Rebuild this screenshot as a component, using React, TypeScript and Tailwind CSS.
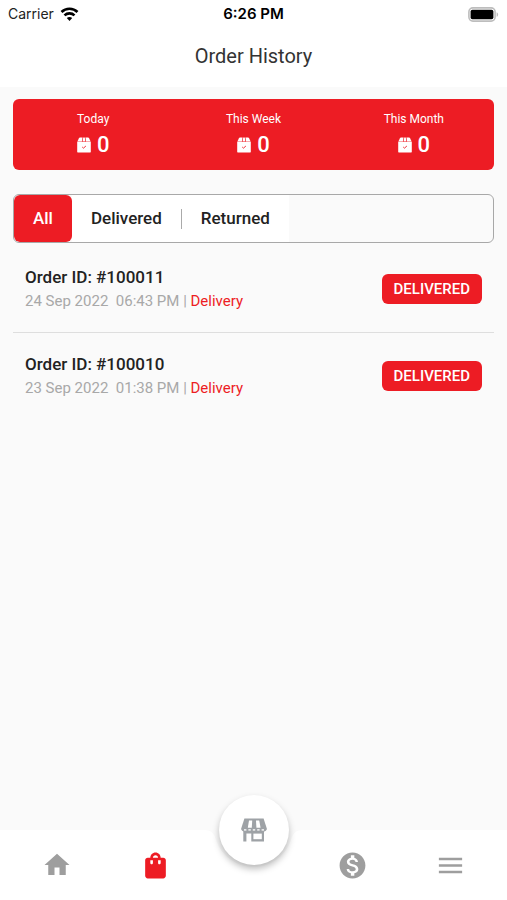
import React, { useState } from 'react';
import { MdHome, MdMenu, MdMonetizationOn, MdShoppingBag } from 'react-icons/md';

interface Order {
  id: number;
  date: string;
  time: string;
  type: string;
  status: string;
}

const orders: Order[] = [
  { id: 100011, date: '24 Sep 2022', time: '06:43 PM', type: 'Delivery', status: 'DELIVERED' },
  { id: 100010, date: '23 Sep 2022', time: '01:38 PM', type: 'Delivery', status: 'DELIVERED' },
];

const stats = [
  { label: 'Today', count: 0 },
  { label: 'This Week', count: 0 },
  { label: 'This Month', count: 0 },
];

const tabs = ['All', 'Delivered', 'Returned'];

const WifiIcon = () => (
  <svg width="19" height="14" viewBox="0 0 18 14" fill="none" stroke="#000" strokeWidth="2.6">
    <path d="M1 5C5.4 0.7 12.6 0.7 17 5" />
    <path d="M4 8.4C6.8 5.7 11.2 5.7 14 8.4" />
    <path d="M9 14L6.3 11.1C7.8 9.7 10.2 9.7 11.7 11.1Z" fill="#000" stroke="none" />
  </svg>
);

const BatteryIcon = () => (
  <svg width="31" height="15" viewBox="0 0 31 15">
    <rect x="0.9" y="0.9" width="26.2" height="13.2" rx="4" fill="#fff" stroke="#bdbdbd" strokeWidth="1.6" />
    <rect x="2.6" y="2.8" width="22.8" height="9.4" rx="1.8" fill="#000" />
    <path d="M28.6 5.2C30.6 6 30.6 9 28.6 9.8Z" fill="#bdbdbd" />
  </svg>
);

const BoxIcon = () => (
  <svg width="14" height="16" viewBox="0 0 14 16" fill="#fff">
    <path d="M3 0.6H5.6L4.9 4.4H0.4L1.8 1.4Q2.2 0.6 3 0.6Z" />
    <path d="M6.2 0.6H7.8L8.3 3.9L7 4.6L5.7 3.9Z" />
    <path d="M8.4 0.6H11Q11.8 0.6 12.2 1.4L13.6 4.4H9.1Z" />
    <path d="M0.2 4.8H13.8V14.4Q13.8 15.6 12.6 15.6H1.4Q0.2 15.6 0.2 14.4Z" />
    <path d="M5.2 10L6.5 11.1L8.9 9" fill="none" stroke="#ed1c24" strokeWidth="0.9" />
  </svg>
);

const StoreIcon = () => (
  <svg width="26" height="24" viewBox="0 0 26 24" fill="#9ea2a6">
    <path d="M3.4 0.4H22.6L25.7 10.2V11.6Q25.2 13.4 23.4 13.4H2.6Q0.8 13.4 0.3 11.6V10.2Z" />
    <path d="M8 2.4H11.2L10.8 9.8H6.8Z" fill="#fff" />
    <path d="M15 2.4H18.2L19.6 9.8H15.4Z" fill="#fff" />
    <path d="M3 12.1H5.4M7.4 12.1H9.8M11.8 12.1H14.2M16.2 12.1H18.6M20.6 12.1H23" stroke="#fff" strokeWidth="1.5" />
    <path d="M2.3 12.8H23V23.6H10.3V15.6H5.4V23.6H2.3Z" />
    <rect x="12.4" y="15.6" width="8.4" height="5.6" fill="#fff" />
  </svg>
);

// Curved cut-out that the store button sits in
const NavNotch = () => (
  <svg className="block h-full w-full" viewBox="0 0 99 70" preserveAspectRatio="none" fill="#fff">
    <path d="M0 0C7 0 10 3 12 10A39.5 39.5 0 0 0 87 10C89 3 92 0 99 0V70H0Z" />
  </svg>
);

const App: React.FC = () => {
  const [activeTab, setActiveTab] = useState('All');

  const visibleOrders = orders.filter(
    (order) => activeTab === 'All' || order.status === activeTab.toUpperCase()
  );

  return (
    <div className="flex min-h-screen flex-col bg-[#fafafa] font-[Roboto,sans-serif]">
      <header className="bg-white">
        {/* Status bar */}
        <div className="grid h-7 grid-cols-3 items-center px-2 font-[Inter,sans-serif] text-black">
          <div className="flex items-center gap-1.5 text-sm text-[#222]">
            <span>Carrier</span>
            <WifiIcon />
          </div>
          <span className="text-center text-[15px] font-semibold">6:26 PM</span>
          <div className="flex justify-end">
            <BatteryIcon />
          </div>
        </div>
        <h1 className="h-[59px] pt-4 text-center text-xl leading-6 text-[#333]">Order History</h1>
      </header>

      <main className="flex-1 px-[13px] pt-3">
        {/* Order counts */}
        <section className="grid h-[71px] grid-cols-3 rounded-md bg-[#ed1c24] pt-3 text-center text-white">
          {stats.map((stat) => (
            <div key={stat.label}>
              <p className="text-xs leading-4">{stat.label}</p>
              <p className="mt-1 flex items-center justify-center gap-1.5 text-[22px] font-medium leading-7">
                <BoxIcon />
                {stat.count}
              </p>
            </div>
          ))}
        </section>

        {/* Filter */}
        <div className="mt-6 flex h-[49px] overflow-hidden rounded-md border border-[#a8a8a8]">
          {tabs.map((tab, index) => (
            <React.Fragment key={tab}>
              {index === 2 && (
                <div className="flex items-center bg-white">
                  <div className="h-5 w-px bg-[#aaa]" />
                </div>
              )}
              <button
                type="button"
                onClick={() => setActiveTab(tab)}
                className={`px-[19px] text-[17px] font-medium ${
                  activeTab === tab ? 'rounded-md bg-[#ed1c24] text-white' : 'bg-white text-[#222]'
                }`}
              >
                {tab}
              </button>
            </React.Fragment>
          ))}
        </div>

        {/* Orders */}
        <ul className="mt-[3px] divide-y divide-[#dedede]">
          {visibleOrders.map((order) => (
            <li key={order.id} className="flex items-center justify-between px-3 py-[19px]">
              <div>
                <h2 className="text-[17px] font-medium leading-6 text-[#222]">Order ID: #{order.id}</h2>
                <p className="whitespace-pre text-[15px] leading-6 text-[#a8a8a8]">
                  {order.date}{'  '}{order.time} | <span className="text-[#ed1c24]">{order.type}</span>
                </p>
              </div>
              <span className="rounded-md bg-[#ed1c24] px-3 text-[15px] font-medium leading-[30px] text-white">
                {order.status}
              </span>
            </li>
          ))}
        </ul>
      </main>

      {/* Bottom navigation */}
      <nav className="flex h-[70px] text-[#9e9e9e]">
        <div className="flex flex-1 bg-white pl-2">
          <button type="button" aria-label="Home" className="flex flex-1 items-center justify-center">
            <MdHome size={30} />
          </button>
          <button type="button" aria-label="Orders" className="flex flex-1 items-center justify-center text-[#ed1c24]">
            <MdShoppingBag size={31} />
          </button>
        </div>
        <div className="relative w-[99px]">
          <NavNotch />
          <button
            type="button"
            aria-label="Store"
            className="absolute -top-[35px] left-[15px] flex h-[70px] w-[70px] items-center justify-center rounded-full bg-white shadow-[0_4px_7px_rgba(0,0,0,0.26)]"
          >
            <StoreIcon />
          </button>
        </div>
        <div className="flex flex-1 bg-white pr-2">
          <button type="button" aria-label="Earnings" className="flex flex-1 items-center justify-center">
            <MdMonetizationOn size={31} />
          </button>
          <button type="button" aria-label="Menu" className="flex flex-1 items-center justify-center">
            <MdMenu size={31} />
          </button>
        </div>
      </nav>
    </div>
  );
};

export default App;
